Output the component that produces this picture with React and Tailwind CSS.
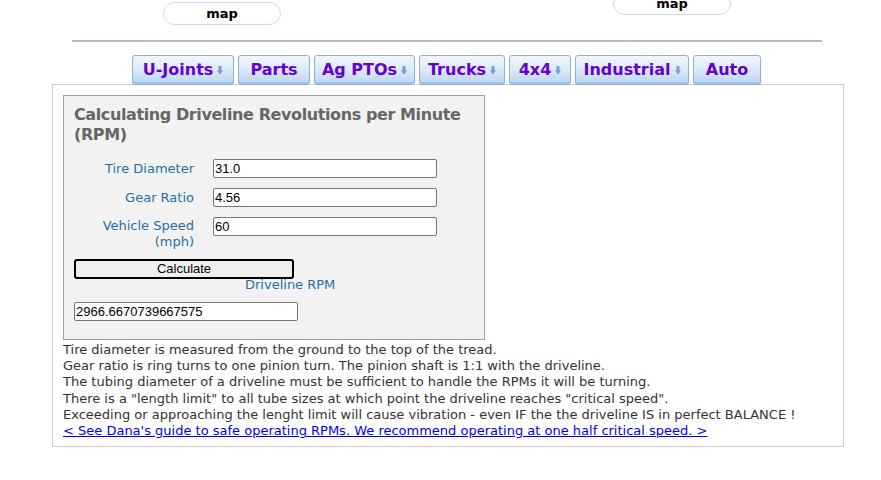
import React from "react";

const V = { fontFamily: '"DejaVu Sans", Verdana, sans-serif' };
const A = { fontFamily: '"Liberation Sans", Arial, sans-serif' };

function Arrow() {
  return (
    <svg width="6" height="9" viewBox="0 0 6 9" className="ml-[4px] mt-[1px]">
      <rect x="1.5" y="0" width="3" height="5" fill="#7d9ad6" />
      <path d="M0 4.5 H6 L3 8.5 Z" fill="#7d9ad6" />
    </svg>
  );
}

function Tab({ label, arrow, w }) {
  return (
    <div
      className="h-[30px] flex items-center justify-center rounded-[3px] border border-[#93acd8] bg-gradient-to-b from-[#f2f7fc] via-[#dbe9f7] to-[#b9d5f2] shadow-[inset_0_-2px_0_#9cc4ee] text-[#6600cc] font-bold text-[16px] whitespace-nowrap"
      style={{ ...V, width: w }}
    >
      <span>{label}</span>
      {arrow && <Arrow />}
    </div>
  );
}

function Field({ value, w = "w-[224px]" }) {
  return (
    <div
      className={`${w} h-[19px] bg-white border border-[#767676] rounded-[2px] text-[13px] text-black leading-[17px] pl-[1px]`}
      style={A}
    >
      {value}
    </div>
  );
}

export default function App() {
  return (
    <div className="w-[881px] h-[480px] bg-white overflow-hidden relative" style={V}>
      <div className="flex h-[36px]">
        <div className="ml-[163px] mt-[2px] w-[118px] h-[23px] rounded-full border border-[#c8d8f0] flex items-center justify-center font-bold text-[13px] text-black">
          map
        </div>
        <div className="ml-[332px] -mt-[8px] w-[118px] h-[23px] rounded-full border border-[#c8d8f0] flex items-center justify-center font-bold text-[13px] text-black">
          map
        </div>
      </div>
      <div className="ml-[72px] mt-[4px] w-[750px] h-[2px] bg-[#b1bdc9]" />
      <div className="ml-[132px] mt-[13px] flex gap-[4px]">
        <Tab label="U-Joints" arrow w="102px" />
        <Tab label="Parts" w="72px" />
        <Tab label="Ag PTOs" arrow w="101px" />
        <Tab label="Trucks" arrow w="86px" />
        <Tab label="4x4" arrow w="62px" />
        <Tab label="Industrial" arrow w="114px" />
        <Tab label="Auto" w="68px" />
      </div>
      <div className="ml-[52px] w-[792px] h-[363px] border border-[#cccccc] p-[10px] -mt-[1px]">
        <div className="w-[422px] h-[245px] bg-[#f2f2f2] border border-[#a0a0a0] pt-[9px] pl-[10px]">
          <div className="text-[16px] font-bold text-[#666666] leading-[20px] tracking-[-0.4px] w-[405px]">
            Calculating Driveline Revolutions per Minute (RPM)
          </div>
          <div className="mt-[14px] flex flex-col gap-[10px] text-[13px] text-[#1f6fa3]">
            <div className="flex items-center h-[19px]">
              <div className="w-[120px] text-right leading-[16px]">Tire Diameter</div>
              <div className="ml-[19px]"><Field value="31.0" /></div>
            </div>
            <div className="flex items-center h-[19px]">
              <div className="w-[120px] text-right leading-[16px]">Gear Ratio</div>
              <div className="ml-[19px]"><Field value="4.56" /></div>
            </div>
            <div className="flex items-start">
              <div className="w-[120px] text-right leading-[16px] pt-[1px]">
                Vehicle Speed<br />(mph)
              </div>
              <div className="ml-[19px]"><Field value="60" /></div>
            </div>
          </div>
          <div
            className="mt-[9px] w-[220px] h-[20px] border-2 border-black rounded-[3px] bg-[#efefef] flex items-center justify-center text-[13px] text-black"
            style={A}
          >
            Calculate
          </div>
          <div className="ml-[171px] text-[13px] text-[#1f6fa3] leading-[14px] mt-[-1px]">
            Driveline RPM
          </div>
          <div className="mt-[10px]">
            <Field value="2966.6670739667575" />
          </div>
        </div>
        <div className="text-[13px] text-[#333333] leading-[16.2px] mt-[2px]">
          <div>Tire diameter is measured from the ground to the top of the tread.</div>
          <div>Gear ratio is ring turns to one pinion turn. The pinion shaft is 1:1 with the driveline.</div>
          <div>The tubing diameter of a driveline must be sufficient to handle the RPMs it will be turning.</div>
          <div>There is a "length limit" to all tube sizes at which point the driveline reaches "critical speed".</div>
          <div>Exceeding or approaching the lenght limit will cause vibration - even IF the the driveline IS in perfect BALANCE !</div>
          <div>
            <a href="#" className="text-[#0000ee] underline">
              &lt; See Dana's guide to safe operating RPMs. We recommend operating at one half critical speed. &gt;
            </a>
          </div>
        </div>
      </div>
    </div>
  );
}
